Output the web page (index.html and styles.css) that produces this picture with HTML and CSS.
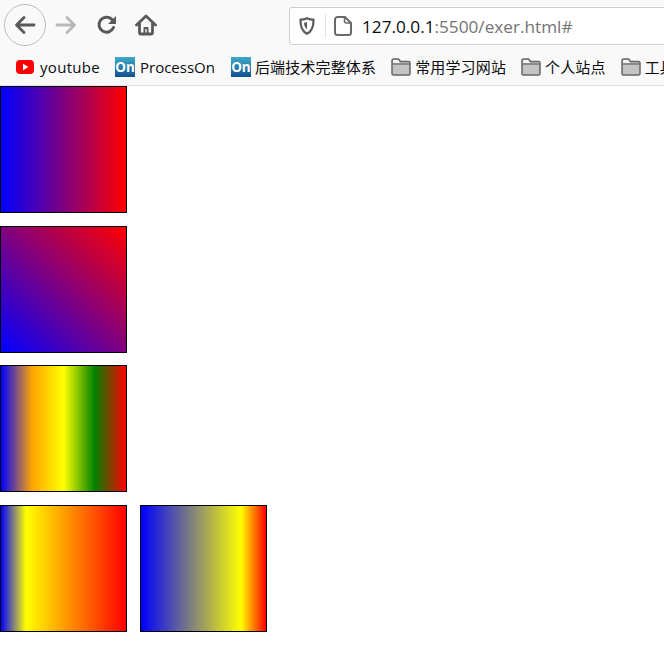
FILE: index.html
```html
<!DOCTYPE html>
<html lang="zh-CN">
<head>
<meta charset="utf-8">
<title>exer</title>
<link rel="stylesheet" href="styles.css">
</head>
<body>
<header class="chrome">
  <div class="toolbar">
    <button class="nav back" aria-label="Back">
      <svg width="22" height="20" viewBox="0 0 22 20"><path d="M20 10H3M10 2.500 2.500 10l7.500 7.500" fill="none" stroke="#59595c" stroke-width="2.800" stroke-linecap="round" stroke-linejoin="round"/></svg>
    </button>
    <button class="nav forward" aria-label="Forward">
      <svg width="22" height="20" viewBox="0 0 22 20"><path d="M2 10h17M12 2.500 19.500 10 12 17.500" fill="none" stroke="#b8b8ba" stroke-width="2.800" stroke-linecap="round" stroke-linejoin="round"/></svg>
    </button>
    <button class="nav reload" aria-label="Reload">
      <svg width="22" height="22" viewBox="0 0 22 22"><path d="M17.500 13.500A7.500 7.500 0 1 1 15.500 5L18 7.500" fill="none" stroke="#59595c" stroke-width="3" stroke-linecap="round"/><path d="M20 2v8h-8z" fill="#59595c"/></svg>
    </button>
    <button class="nav home" aria-label="Home">
      <svg width="22" height="22" viewBox="0 0 22 22"><path d="M1.500 11 11 2l9.500 9M4.500 9v9.500a1.500 1.500 0 0 0 1.500 1.500h10a1.500 1.500 0 0 0 1.500-1.500V9" fill="none" stroke="#59595c" stroke-width="2.800" stroke-linecap="round" stroke-linejoin="round"/><path d="M8.500 20v-6a1 1 0 0 1 1-1h3a1 1 0 0 1 1 1v6h-1.800v-5h-1.400v5z" fill="#59595c"/></svg>
    </button>
    <div class="urlbar">
      <svg class="shield" width="16" height="18" viewBox="0 0 16 18"><path d="M8 1.200C5.800 2.300 3.800 2.700 1.500 2.700 1.300 9 2.800 14 8 16.800 13.200 14 14.700 9 14.500 2.700 12.200 2.700 10.200 2.300 8 1.200Z" fill="none" stroke="#5b5b5f" stroke-width="2.200" stroke-linejoin="round"/><path d="M8 5c-1.200.5-2 .7-3 .7.100 2.800.9 5 3 6.500z" fill="#5b5b5f"/></svg>
      <span class="sep"></span>
      <svg class="page" width="18" height="20" viewBox="0 0 18 20"><path d="M3.500 1h7.500l6 6v9.500a2.500 2.500 0 0 1-2.500 2.500h-11A2.500 2.500 0 0 1 1 16.500v-13A2.500 2.500 0 0 1 3.500 1Z" fill="#fff" stroke="#6a6a6d" stroke-width="2"/><path d="M10.500 1v4a2 2 0 0 0 2 2H17" fill="none" stroke="#6a6a6d" stroke-width="1.600"/></svg>
      <span class="url"><span class="host">127.0.0.1</span><span class="rest">:5500/exer.html#</span></span>
    </div>
  </div>
  <nav class="bookmarks">
    <a class="mark latin-wide">
      <svg width="18" height="14" viewBox="0 0 18 14"><rect width="18" height="14" rx="4" fill="#f00"/><path d="M7 3.800v6.400L12.500 7z" fill="#fff"/></svg>
      <span>youtube</span>
    </a>
    <a class="mark"><span class="on">On</span><span>ProcessOn</span></a>
    <a class="mark cjk"><span class="on">On</span><span>后端技术完整体系</span></a>
    <a class="mark cjk"><svg class="folder" width="20" height="18" viewBox="0 0 20 18"><use href="#folder"/></svg><span>常用学习网站</span></a>
    <a class="mark cjk"><svg class="folder" width="20" height="18" viewBox="0 0 20 18"><use href="#folder"/></svg><span>个人站点</span></a>
    <a class="mark cjk"><svg class="folder" width="20" height="18" viewBox="0 0 20 18"><use href="#folder"/></svg><span>工具</span></a>
  </nav>
  <svg class="defs" width="0" height="0">
    <symbol id="folder" viewBox="0 0 20 18">
      <path d="M2.500 1h5l2 2.500h8A1.500 1.500 0 0 1 19 5v10.500a1.500 1.500 0 0 1-1.500 1.500h-15A1.500 1.500 0 0 1 1 15.500v-13A1.500 1.500 0 0 1 2.500 1Z" fill="#c4c4c6" stroke="#666" stroke-width="1.500"/>
      <path d="M1.500 6h17" stroke="#666" stroke-width="1.200"/>
      <path d="M2 2h5l2 3H2z" fill="#f4f4f4"/>
    </symbol>
  </svg>
</header>
<main class="content">
  <div class="row"><div class="box g1"></div></div>
  <div class="row"><div class="box g2"></div></div>
  <div class="row"><div class="box g3"></div></div>
  <div class="row"><div class="box g4"></div><div class="box g5"></div></div>
</main>
</body>
</html>
```
FILE: styles.css
```css
* { box-sizing: border-box; }
html, body { margin: 0; padding: 0; background: #fff; overflow: hidden; }
body { font-family: "Open Sans", "Noto Sans CJK SC", sans-serif; }

.chrome { background: #f9f9fa; height: 86px; border-bottom: 1px solid #e1e1e2; overflow: hidden; }

.toolbar { display: flex; align-items: flex-start; height: 50px; padding: 4px 0 0 4px; }
.nav { border: 0; padding: 0; background: none; display: flex; align-items: center; justify-content: center; height: 42px; }
.back { width: 42px; border: 1px solid #bdbdbf; border-radius: 50%; margin-right: 9px; }
.forward { width: 22px; margin-right: 19px; }
.reload { width: 22px; margin-right: 17px; }
.home { width: 22px; margin-right: 132px; }

.urlbar { flex: 1; display: flex; align-items: center; height: 38px; margin-top: 3px; margin-right: -4px; padding-left: 9px; background: #fff; border: 1px solid #cfcfd0; border-radius: 3px 0 0 3px; white-space: nowrap; }
.shield { flex: none; }
.sep { width: 1px; height: 24px; background: #e2e2e3; margin: 0 8px 0 10px; }
.page { flex: none; margin-right: 10px; }
.url { font-size: 17.2px; }
.host { color: #0c0c0d; }
.rest { color: #737373; }

.bookmarks { display: flex; align-items: center; height: 35px; padding-left: 16px; gap: 15px; white-space: nowrap; margin-top: -1px; }
.mark { display: flex; align-items: center; flex: none; gap: 5px; font-size: 15px; color: #0c0c0d; }
.latin-wide { gap: 6px; letter-spacing: 0.3px; }
.mark:nth-child(2) { margin-right: 1px; }
.cjk { letter-spacing: 0.15px; }
.cjk .on { margin-right: -1px; }
.on { width: 20px; height: 20px; display: flex; align-items: center; justify-content: center; background: linear-gradient(#3fa9c9, #125291); color: #fff; font-size: 13.5px; font-weight: 700; letter-spacing: 0; }
.folder { flex: none; margin-right: -1px; }
.defs { position: absolute; }

.content { padding-bottom: 24px; }
.row { display: flex; gap: 13px; margin-bottom: 13px; }
.row:nth-child(2) { margin-bottom: 12px; }
.box { width: 127px; height: 127px; border: 1px solid #000; }
.g1 { background: linear-gradient(to right, blue, red); }
.g2 { background: linear-gradient(to top right, blue, red); }
.g3 { background: linear-gradient(to right, blue, orange, yellow, green, red); }
.g4 { background: linear-gradient(to right, blue, yellow 20%, red); }
.g5 { background: linear-gradient(to right, blue, yellow 80%, red); }
```
